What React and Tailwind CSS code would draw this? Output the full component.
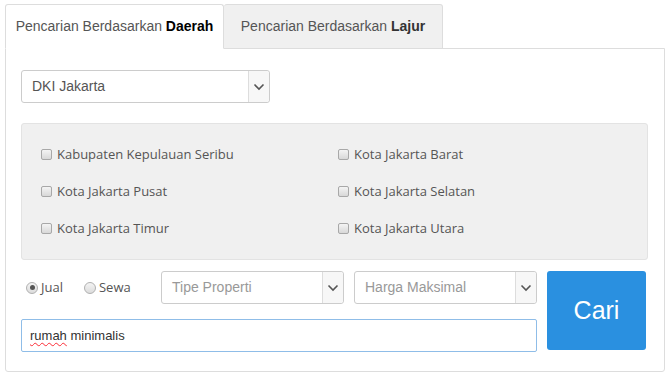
import { useState } from "react";

const regions = [
  "Kabupaten Kepulauan Seribu",
  "Kota Jakarta Barat",
  "Kota Jakarta Pusat",
  "Kota Jakarta Selatan",
  "Kota Jakarta Timur",
  "Kota Jakarta Utara",
];

const Chevron = () => (
  <svg width="12" height="8" viewBox="0 0 12 8" fill="none">
    <polyline points="1.5,1.5 6,6 10.5,1.5" stroke="#555" strokeWidth="1.6" />
  </svg>
);

const SelectBox = ({ label, placeholder, className }) => (
  <div className={`flex h-[33px] border border-[#ccc] rounded-[3px] bg-white ${className}`}>
    <div className={`flex-1 flex items-center pl-[10px] text-[14px] ${placeholder ? "text-[#999]" : "text-[#555]"}`}>
      {label}
    </div>
    <div className="w-[21px] flex items-center justify-center border-l border-[#ddd] bg-[#f7f7f7] rounded-r-[3px]">
      <Chevron />
    </div>
  </div>
);

const Checkbox = () => (
  <span className="w-[11px] h-[11px] rounded-[2px] border border-[#a8a8a8] bg-gradient-to-b from-[#f4f4f4] to-[#d8d8d8] shrink-0" />
);

const Radio = ({ checked }) => (
  <span className="w-[12px] h-[12px] rounded-full border border-[#b0b0b0] bg-gradient-to-b from-[#f4f4f4] to-[#dcdcdc] flex items-center justify-center shrink-0">
    {checked && <span className="w-[5px] h-[5px] rounded-full bg-[#555]" />}
  </span>
);

const App = () => {
  const [activeTab] = useState("daerah");

  return (
    <div className="w-[668px] h-[376px] bg-white pt-[4px] pl-[5px] font-['Liberation_Sans',Arial,sans-serif] text-[#555]">
      <div className="w-[660px]">
        <div className="flex h-[45px] relative z-10">
          <div className={`w-[219px] flex items-center justify-center text-[14px] border border-[#ddd] rounded-t-[3px] ${activeTab === "daerah" ? "bg-white border-b-white" : "bg-[#f0f0f0] border-b-[#ddd]"}`}>
            Pencarian Berdasarkan&nbsp;<b className="text-black">Daerah</b>
          </div>
          <div className="w-[219px] flex items-center justify-center text-[14px] border border-l-0 border-[#ddd] rounded-t-[3px] bg-[#f0f0f0]">
            Pencarian Berdasarkan&nbsp;<b className="text-[#333]">Lajur</b>
          </div>
        </div>
        <div className="-mt-px h-[324px] border border-[#ddd] rounded-b-[3px] pt-[21px] pl-[15px] pr-[16px]">
          <SelectBox label="DKI Jakarta" className="w-[249px]" />

          <div className="mt-[20px] w-[627px] h-[137px] bg-[#f0f0f0] border border-[#e3e3e3] rounded-[3px] py-[12px] pl-[19px] grid grid-cols-[297px_1fr] font-['Open_Sans',sans-serif]">
            {regions.map((r) => (
              <label key={r} className="h-[37px] flex items-center gap-[5px] text-[13px] text-[#555]">
                <Checkbox />
                {r}
              </label>
            ))}
          </div>

          <div className="mt-[11px] flex gap-[10px]">
            <div className="w-[516px] flex flex-col gap-[15px]">
              <div className="flex items-center">
                <div className="w-[140px] flex items-center pl-[5px] text-[13px] text-[#555] font-['Open_Sans',sans-serif]">
                  <Radio checked />
                  <span className="ml-[3px] mr-[21px]">Jual</span>
                  <Radio />
                  <span className="ml-[3px]">Sewa</span>
                </div>
                <SelectBox label="Tipe Properti" placeholder className="w-[183px]" />
                <SelectBox label="Harga Maksimal" placeholder className="w-[183px] ml-[10px]" />
              </div>
              <div className="h-[33px] border border-[#8fbde8] rounded-[2px] flex items-center pl-[8px] text-[13px] text-[#333]">
                <span className="underline decoration-wavy decoration-red-500 decoration-1 underline-offset-2">rumah</span>
                &nbsp;minimalis
              </div>
            </div>
            <button className="w-[99px] h-[79px] bg-[#2a90e0] rounded-[3px] text-white text-[25px]">
              Cari
            </button>
          </div>
        </div>
      </div>
    </div>
  );
};

export default App;
